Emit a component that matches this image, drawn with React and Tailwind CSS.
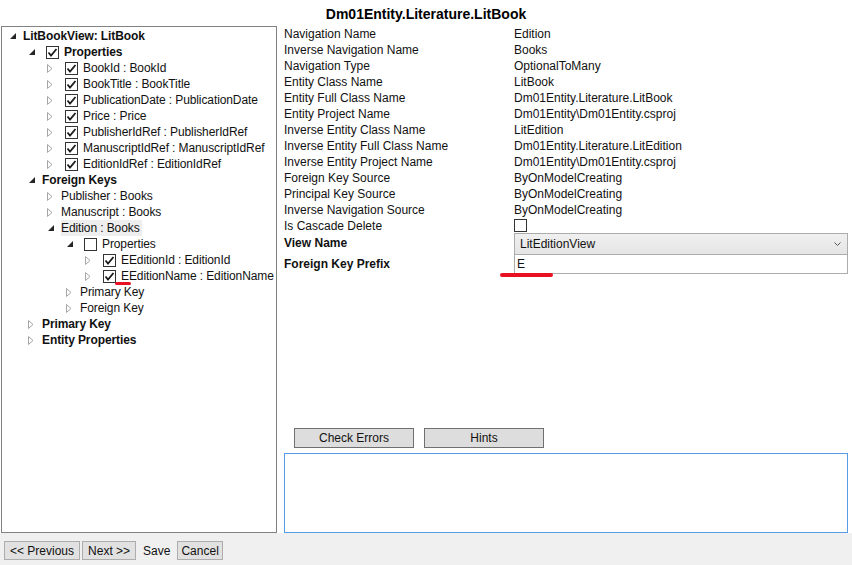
import React from 'react';

const FONT = { fontFamily: '"Segoe UI", "Liberation Sans", Arial, sans-serif' };

// tree rows: level, arrow ('open' | 'closed' | null), check (true/false/undefined), text, bold, highlight
const TREE = [
  { level: 0, arrow: 'open', text: 'LitBookView: LitBook', bold: true },
  { level: 1, arrow: 'open', check: true, text: 'Properties', bold: true },
  { level: 2, arrow: 'closed', check: true, text: 'BookId : BookId' },
  { level: 2, arrow: 'closed', check: true, text: 'BookTitle : BookTitle' },
  { level: 2, arrow: 'closed', check: true, text: 'PublicationDate : PublicationDate' },
  { level: 2, arrow: 'closed', check: true, text: 'Price : Price' },
  { level: 2, arrow: 'closed', check: true, text: 'PublisherIdRef : PublisherIdRef' },
  { level: 2, arrow: 'closed', check: true, text: 'ManuscriptIdRef : ManuscriptIdRef' },
  { level: 2, arrow: 'closed', check: true, text: 'EditionIdRef : EditionIdRef' },
  { level: 1, arrow: 'open', text: 'Foreign Keys', bold: true },
  { level: 2, arrow: 'closed', text: 'Publisher : Books' },
  { level: 2, arrow: 'closed', text: 'Manuscript : Books' },
  { level: 2, arrow: 'open', text: 'Edition : Books', highlight: true },
  { level: 3, arrow: 'open', check: false, text: 'Properties' },
  { level: 4, arrow: 'closed', check: true, text: 'EEditionId : EditionId' },
  { level: 4, arrow: 'closed', check: true, text: 'EEditionName : EditionName' },
  { level: 3, arrow: 'closed', text: 'Primary Key' },
  { level: 3, arrow: 'closed', text: 'Foreign Key' },
  { level: 1, arrow: 'closed', text: 'Primary Key', bold: true },
  { level: 1, arrow: 'closed', text: 'Entity Properties', bold: true },
];

const PROPS = [
  ['Navigation Name', 'Edition'],
  ['Inverse Navigation Name', 'Books'],
  ['Navigation Type', 'OptionalToMany'],
  ['Entity Class Name', 'LitBook'],
  ['Entity Full Class Name', 'Dm01Entity.Literature.LitBook'],
  ['Entity Project Name', 'Dm01Entity\\Dm01Entity.csproj'],
  ['Inverse Entity Class Name', 'LitEdition'],
  ['Inverse Entity Full Class Name', 'Dm01Entity.Literature.LitEdition'],
  ['Inverse Entity Project Name', 'Dm01Entity\\Dm01Entity.csproj'],
  ['Foreign Key Source', 'ByOnModelCreating'],
  ['Principal Key Source', 'ByOnModelCreating'],
  ['Inverse Navigation Source', 'ByOnModelCreating'],
];

function Arrow({ kind }) {
  if (kind === 'open') {
    return (
      <svg width="6" height="6" viewBox="0 0 6 6" className="ml-[6px]">
        <polygon points="6,0 6,6 0,6" fill="#262626" />
      </svg>
    );
  }
  if (kind === 'closed') {
    return (
      <svg width="6" height="9" viewBox="0 0 6 9" className="ml-[5px]">
        <polygon points="0.5,0.5 5,4.5 0.5,8.5" fill="none" stroke="#a6a6a6" strokeWidth="1" />
      </svg>
    );
  }
  return null;
}

function CheckBox({ checked }) {
  return (
    <div className="w-[13px] h-[13px] border border-[#333333] bg-white flex items-center justify-center shrink-0">
      {checked && (
        <svg width="11" height="11" viewBox="0 0 11 11">
          <polyline points="1.5,5.5 4,8.5 9.5,2" fill="none" stroke="#1a1a1a" strokeWidth="1.8" />
        </svg>
      )}
    </div>
  );
}

function TreeRow({ row }) {
  return (
    <div className="h-[16px] flex items-center" style={{ paddingLeft: 2 + row.level * 19 }}>
      <div className="w-[19px] h-[16px] flex items-center shrink-0">
        <Arrow kind={row.arrow} />
      </div>
      {row.check !== undefined && (
        <div className="ml-[4px] mr-[5px]">
          <CheckBox checked={row.check} />
        </div>
      )}
      <span
        className={`whitespace-nowrap leading-[16px] text-[12px] tracking-[-0.1px] text-[#111] ${row.bold ? 'font-bold' : ''} ${row.highlight ? 'bg-[#eeeeee] pr-[2px]' : ''}`}
      >
        {row.text}
      </span>
    </div>
  );
}

export default function App() {
  return (
    <div className="w-[852px] h-[565px] bg-white flex flex-col overflow-hidden relative" style={FONT}>
      <div className="h-[25px] flex items-center justify-center text-[14px] font-bold text-black pt-[4px]">
        Dm01Entity.Literature.LitBook
      </div>

      <div className="h-[508px] flex">
        {/* tree */}
        <div className="ml-[1px] mt-[1px] w-[276px] h-[507px] border border-[#828282] pt-[1px] overflow-hidden">
          {TREE.map((r, i) => (
            <TreeRow key={i} row={r} />
          ))}
        </div>

        {/* properties */}
        <div className="ml-[7px] w-[564px] flex flex-col text-[12px] text-[#111]">
          <div className="mt-[1px]">
            {PROPS.map(([label, value]) => (
              <div key={label} className="h-[16px] flex items-center">
                <span className="w-[230px] shrink-0 whitespace-nowrap">{label}</span>
                <span className="whitespace-nowrap">{value}</span>
              </div>
            ))}
          </div>
          <div className="h-[15px] flex items-center">
            <span className="w-[230px] shrink-0">Is Cascade Delete</span>
            <div className="w-[13px] h-[13px] border border-[#333333] bg-white" />
          </div>
          <div className="h-[22px] flex items-center">
            <span className="w-[230px] shrink-0 font-bold -mt-[3px]">View Name</span>
            <div className="flex-1 h-[22px] border border-[#acacac] bg-gradient-to-b from-[#f0f0f0] to-[#e5e5e5] flex items-center justify-between px-[5px]">
              <span>LitEditionView</span>
              <svg width="7" height="4" viewBox="0 0 7 4" className="mr-[1px]">
                <polyline points="0.5,0.5 3.5,3.5 6.5,0.5" fill="none" stroke="#555" strokeWidth="1" />
              </svg>
            </div>
          </div>
          <div className="h-[19px] flex items-center">
            <span className="w-[230px] shrink-0 font-bold -mt-[1px]">Foreign Key Prefix</span>
            <div className="flex-1 h-[19px] border border-[#acacac] border-t-0 bg-white flex items-center px-[2px]">
              <span>E</span>
            </div>
          </div>

          <div className="flex-1" />

          <div className="h-[20px] flex gap-[10px] pl-[10px]">
            <button className="w-[120px] h-[20px] bg-[#dddddd] border border-[#707070] text-[12px] text-[#111] leading-none">
              Check Errors
            </button>
            <button className="w-[120px] h-[20px] bg-[#dddddd] border border-[#707070] text-[12px] text-[#111] leading-none">
              Hints
            </button>
          </div>
          <div className="mt-[5px] h-[80px] border border-[#569de5] bg-white" />
        </div>
      </div>

      {/* bottom bar */}
      <div className="flex-1 bg-[#f0f0f0] flex items-start pt-[8px] pl-[4px] text-[12px] text-[#111]">
        <button className="h-[19px] px-[5px] bg-[#e1e1e1] border border-[#adadad] leading-none">&lt;&lt; Previous</button>
        <button className="h-[19px] ml-[2px] px-[5px] bg-[#e1e1e1] border border-[#adadad] leading-none">Next &gt;&gt;</button>
        <span className="ml-[7px] h-[19px] flex items-center">Save</span>
        <button className="h-[19px] ml-[7px] px-[3px] bg-[#e1e1e1] border border-[#adadad] leading-none">Cancel</button>
      </div>

      {/* red annotation marks */}
      <div className="absolute left-[115px] top-[282px] w-[16px] h-[3px] rounded-full bg-[#e81123]" />
      <div className="absolute left-[500px] top-[273px] w-[53px] h-[4px] rounded-full bg-[#e81123]" />
    </div>
  );
}
